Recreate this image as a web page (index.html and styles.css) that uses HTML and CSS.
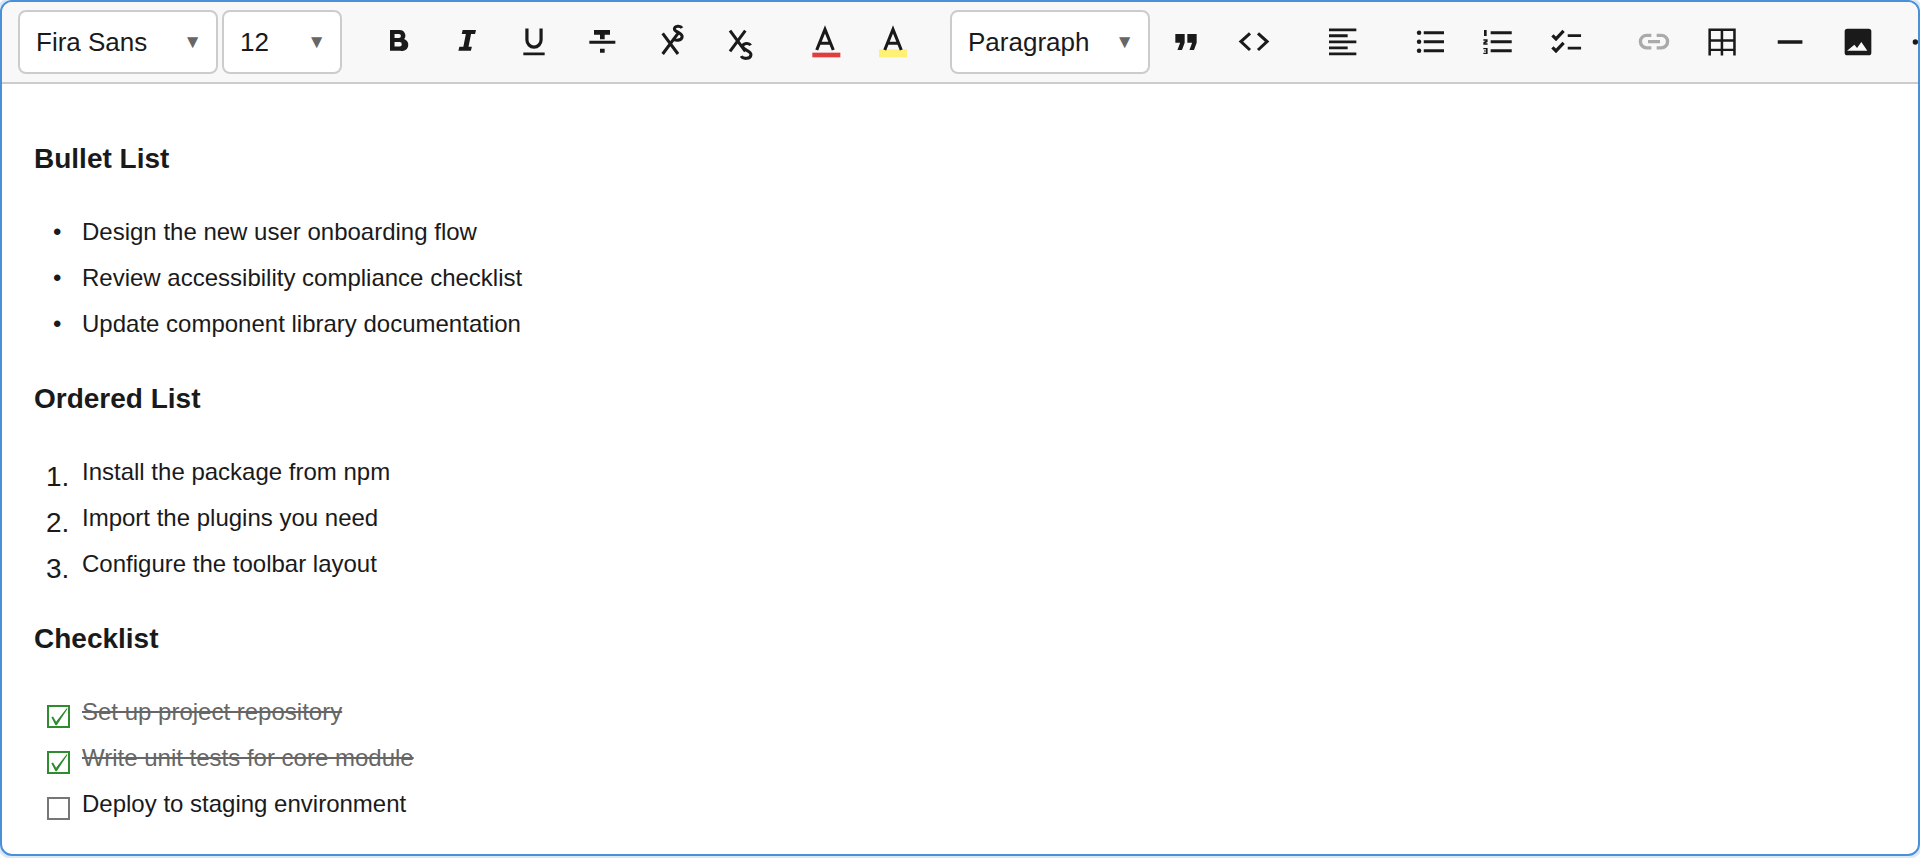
FILE: index.html
```html
<!DOCTYPE html>
<html lang="en">
<head>
<meta charset="utf-8">
<title>Editor</title>
<link rel="stylesheet" href="styles.css">
</head>
<body>
<div class="editor">
  <div class="toolbar">
    <div class="select font"><span>Fira Sans</span><i class="caret">▼</i></div>
    <div class="select size"><span>12</span><i class="caret">▼</i></div>
    <div class="group first">
      <button class="btn"><svg viewBox="0 0 24 24"><path fill-rule="evenodd" d="M6 3h7.300a4.200 4.200 0 0 1 3.300 6.800A4.500 4.500 0 0 1 13.800 18.500H6zm3.400 3v3h3.300a1.500 1.500 0 0 0 0-3zm0 6v3.300h3.800a1.650 1.650 0 0 0 0-3.300z"/></svg></button>
      <button class="btn"><svg viewBox="0 0 24 24"><path d="M9.500 3h10l-.7 3h-3l-1.900 9.500h2.500l-.7 3H6.300l.7-3h3L11.900 6H8.800z"/></svg></button>
      <button class="btn"><svg viewBox="0 0 24 24"><path d="M5.500 1.800h2.400v8.700a4.100 4.100 0 0 0 8.200 0V1.800h2.400v8.700a6.500 6.500 0 0 1-13 0zM4 19.800h16V22H4z"/></svg></button>
      <button class="btn"><svg viewBox="0 0 24 24"><path d="M6 3h12v3.500h-4v3.500h-3.500V6.500H6zM2.500 11h19.500v2.400H2.500zM10.500 17h3.500v3h-3.500z"/></svg></button>
      <button class="btn"><svg viewBox="0 0 24 24"><path class="line" d="m6.500 5.500 11.500 15.500M18 5.500 6.500 21M21 1.500c-1.200-2-5.500-1.800-5.700.6-.2 2.400 6.100 2.800 5.800 6-.3 3-5.600 3.300-6.800 1"/></svg></button>
      <button class="btn"><svg viewBox="0 0 24 24"><path class="line" d="M6 3.500 17.500 19M17.500 3.500 6 19M21.500 14.500c-1.200-2-5.700-1.800-6 .8-.2 2.600 6.500 3 6.200 6.300-.3 3.200-6 3.500-7.300 1"/></svg></button>
    </div>
    <div class="group">
      <button class="btn"><svg viewBox="0 0 24 24"><path class="line" d="m5.800 18 6.200-15.500L18.200 18M8 13h8"/><rect class="red" x="2.500" y="20" width="21" height="3.500"/></svg></button>
      <button class="btn"><svg viewBox="0 0 24 24"><rect class="yellow" x="1.500" y="17.500" width="21" height="6"/><path class="line" d="m5.800 18 6.200-15.500L18.200 18M8 13h8"/></svg></button>
    </div>
    <div class="select para"><span>Paragraph</span><i class="caret">▼</i></div>
    <div class="group tight">
      <button class="btn"><svg viewBox="0 0 24 24"><path d="M4 6h7v6.500L9 18H5.600l2-5.500H4zM13 6h7v6.500L18 18h-3.400l2-5.500H13z"/></svg></button>
      <button class="btn"><svg viewBox="0 0 24 24"><path class="line" d="M9 5.500 2.200 11.700 9 18M15 5.500l6.800 6.200L15 18"/></svg></button>
    </div>
    <div class="group wide">
      <button class="btn"><svg viewBox="0 0 24 24"><path d="M1.500 1.800H22v2.200H1.500zM1.500 6.200h14v2.200h-14zM1.500 10.800H22v2.200H1.500zM1.500 15.300h14v2.200h-14zM1.500 19.800H22V22H1.500z"/></svg></button>
    </div>
    <div class="group">
      <button class="btn"><svg viewBox="0 0 24 24"><circle cx="3.800" cy="5" r="1.700"/><circle cx="3.800" cy="11.800" r="1.700"/><circle cx="3.800" cy="18.500" r="1.700"/><path d="M7.300 3.900h15.200v2.200H7.300zM7.300 10.700h15.200v2.200H7.300zM7.300 17.400h15.200v2.200H7.300z"/></svg></button>
      <button class="btn"><svg viewBox="0 0 24 24"><path d="M1.500 3h2v4.500H1.500zM1 10h3.200v2l-1.800 1h1.800v1H1v-1.800l1.800-1.200H1zM1 16.500h3.200V21H1v-1h2v-.8H1.500v-.9H3v-.8H1zM6.500 3.900h15.800v2.200H6.500zM6.500 10.700h15.800v2.200H6.500zM6.500 17.400h15.800v2.200H6.500z"/></svg></button>
      <button class="btn"><svg viewBox="0 0 24 24"><path class="thick" d="m1.800 7 2.700 2.700 5.700-6M1.800 16 4.500 18.700l5.700-6"/><path d="M13.300 6.200h10v2.100h-10zM13.300 15.500h10v2.100h-10z"/></svg></button>
    </div>
    <div class="group last">
      <button class="btn muted"><svg viewBox="0 0 24 24"><path class="link" d="M10 7H6.500a4.700 4.700 0 0 0 0 9.400H10M14 7h3.500a4.700 4.700 0 0 1 0 9.400H14M7.500 11.700h9"/></svg></button>
      <button class="btn"><svg viewBox="0 0 24 24"><path fill-rule="evenodd" d="M1.800 1.800h20.500v20.400h-1.900v-3.400h-7.500v3.400H11v-3.400H3.700v3.400H1.800zm1.900 1.900V10H11V3.700zm9.200 0V10h7.500V3.700zM3.700 11.900V17H11v-5.100zm9.200 0V17h7.500v-5.100z"/></svg></button>
      <button class="btn"><svg viewBox="0 0 24 24"><path d="M2.800 10.600h18.500v2.800H2.800z"/></svg></button>
      <button class="btn"><svg viewBox="0 0 24 24"><path fill-rule="evenodd" d="M4 2h16a2 2 0 0 1 2 2v16a2 2 0 0 1-2 2H4a2 2 0 0 1-2-2V4a2 2 0 0 1 2-2zm-.200 16.500H19l-4.500-6.500-3.200 4.500L9.300 14z"/></svg></button>
      <button class="btn"><svg viewBox="0 0 24 24"><circle cx="4" cy="12" r="2"/><circle cx="12" cy="12" r="2"/><circle cx="20" cy="12" r="2"/></svg></button>
    </div>
  </div>
  <div class="content">
    <h3 class="heading">Bullet List</h3>
    <ul class="list">
      <li class="item"><span class="mark dot">•</span><span>Design the new user onboarding flow</span></li>
      <li class="item"><span class="mark dot">•</span><span>Review accessibility compliance checklist</span></li>
      <li class="item"><span class="mark dot">•</span><span>Update component library documentation</span></li>
    </ul>
    <h3 class="heading">Ordered List</h3>
    <ul class="list">
      <li class="item"><span class="mark num">1.</span><span>Install the package from npm</span></li>
      <li class="item"><span class="mark num">2.</span><span>Import the plugins you need</span></li>
      <li class="item"><span class="mark num">3.</span><span>Configure the toolbar layout</span></li>
    </ul>
    <h3 class="heading">Checklist</h3>
    <ul class="list">
      <li class="item done"><span class="box on"><svg viewBox="0 0 22 22"><path d="M2.700 12l2-1 3.500 6L20.500 1.500l1 .5L9 21H7.500z"/></svg></span><span>Set up project repository</span></li>
      <li class="item done"><span class="box on"><svg viewBox="0 0 22 22"><path d="M2.700 12l2-1 3.500 6L20.500 1.500l1 .5L9 21H7.500z"/></svg></span><span>Write unit tests for core module</span></li>
      <li class="item"><span class="box"></span><span>Deploy to staging environment</span></li>
    </ul>
  </div>
</div>
</body>
</html>
```
FILE: styles.css
```css
* { box-sizing: border-box; }
html, body { margin: 0; padding: 0; background: #fff; height: 100%; overflow: hidden; }
body { font-family: "Liberation Sans", Arial, sans-serif; color: #1a1a1a; }
.editor {
  height: 856px;
  border: 2px solid #4a90d9;
  border-radius: 12px;
  box-shadow: 0 0 0 3px rgba(74, 144, 217, .2);
  overflow: hidden;
  background: #fff;
  display: flex;
  flex-direction: column;
}
.toolbar {
  display: flex;
  align-items: center;
  flex: none;
  height: 82px;
  padding: 0 0 0 16px;
  background: #f8f8f8;
  border-bottom: 2px solid #ccc;
  gap: 4px;
  overflow: hidden;
}
.select {
  flex: none;
  height: 64px;
  display: flex;
  align-items: center;
  justify-content: space-between;
  padding: 0 14px 0 16px;
  background: #fff;
  border: 2px solid #ccc;
  border-radius: 8px;
  font-size: 26px;
  color: #1a1a1a;
}
.font { width: 200px; }
.size { width: 120px; }
.para { width: 200px; margin-left: 19px; }
.caret { font-style: normal; font-size: 19px; color: #666; }
.group { display: flex; flex: none; margin-left: 15px; }
.group.first { margin-left: 18px; }
.group.tight { margin-left: -2px; }
.group.wide { margin-left: 17px; }
.group.last { margin-left: 16px; }
.btn {
  width: 68px;
  height: 64px;
  flex: none;
  padding: 0;
  border: 0;
  background: none;
  display: flex;
  align-items: center;
  justify-content: center;
  color: #1a1a1a;
}
.btn svg { width: 32px; height: 32px; fill: currentColor; display: block; overflow: visible; }
.btn .line { fill: none; stroke: currentColor; stroke-width: 2.300; }
.btn .link { fill: none; stroke: currentColor; stroke-width: 2.500; }
.btn .thick { fill: none; stroke: currentColor; stroke-width: 2.400; }
.btn .red { fill: #e03e3e; stroke: none; }
.btn .yellow { fill: #fff176; stroke: none; }
.muted { color: #aaa; }
.content {
  flex: 1;
  padding: 58px 32px 0;
  border-bottom: 2px solid #ccc;
}
.heading { margin: 0 0 33px; font-size: 28px; line-height: 34px; font-weight: 700; color: #1a1a1a; }
.list { margin: 0 0 35px; padding: 0; list-style: none; }
.item { display: flex; height: 46px; font-size: 24px; line-height: 46px; color: #1a1a1a; }
.mark { flex: none; width: 48px; padding-left: 12px; }
.dot { padding-left: 19px; }
.num { font-size: 28px; position: relative; top: 5px; }
.box {
  flex: none;
  width: 23px;
  height: 23px;
  margin: 16px 12px 0 13px;
  border: 2px solid #767676;
}
.box.on { border-color: #2e8b2e; }
.box svg { display: block; width: 100%; height: 100%; fill: #2e8b2e; overflow: visible; }
.done > span:last-child { color: #666; text-decoration: line-through; }
```
